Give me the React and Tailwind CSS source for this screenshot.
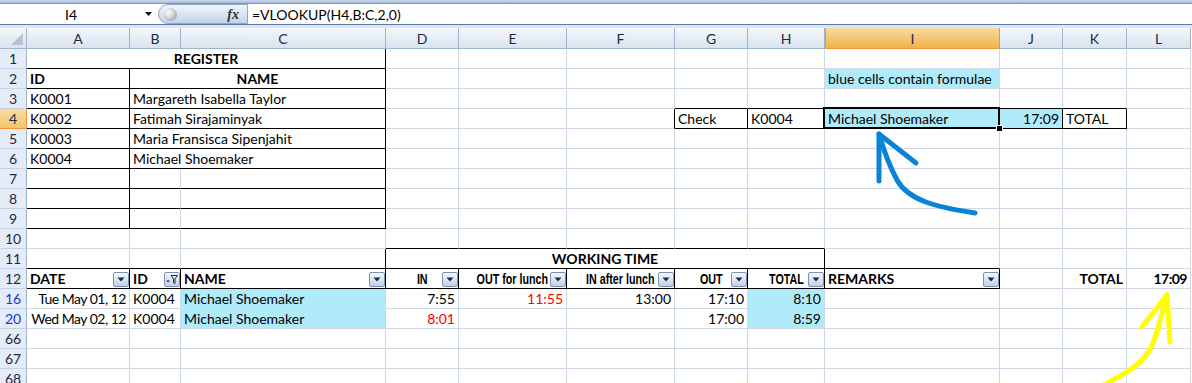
import React from "react";

const COLS = ["A", "B", "C", "D", "E", "F", "G", "H", "I", "J", "K", "L"];

// border colours: g = gridline, k = black border, c = hidden under the blue fill
const RIGHT = { g: "border-r-[#d0d7e5]", k: "border-r-black", c: "border-r-[#b0ebfa]" };
const BOTTOM = { g: "border-b-[#d0d7e5]", k: "border-b-black", c: "border-b-[#b0ebfa]" };
const SPAN = { 1: "", 2: "col-span-2", 3: "col-span-3", 5: "col-span-5" };
const ALIGN = { l: "justify-start", r: "justify-end", c: "justify-center" };

const box = { r: "k", b: "k" };
const bk = { b: "k" };

const rows = [
  { n: "1", cells: { A: { ...box, span: 3, t: "REGISTER", bold: true, al: "c" } } },
  {
    n: "2",
    cells: {
      A: { ...box, t: "ID", bold: true },
      B: { ...box, span: 2, t: "NAME", bold: true, al: "c" },
      I: { t: "blue cells contain formulae", bg: true },
    },
  },
  {
    n: "3",
    cells: {
      A: { ...box, t: "K0001" },
      B: { ...box, span: 2, t: "Margareth Isabella Taylor" },
      G: bk, H: bk, I: bk, J: bk, K: bk,
    },
  },
  {
    n: "4",
    active: true,
    cells: {
      A: { ...box, t: "K0002" },
      B: { ...box, span: 2, t: "Fatimah Sirajaminyak" },
      F: { r: "k" },
      G: { ...box, t: "Check" },
      H: { ...box, t: "K0004" },
      I: { ...box, t: "Michael Shoemaker", bg: true, sel: true },
      J: { ...box, t: "17:09", al: "r", bg: true },
      K: { ...box, t: "TOTAL" },
    },
  },
  { n: "5", cells: { A: { ...box, t: "K0003" }, B: { ...box, span: 2, t: "Maria Fransisca Sipenjahit" } } },
  { n: "6", cells: { A: { ...box, t: "K0004" }, B: { ...box, span: 2, t: "Michael Shoemaker" } } },
  { n: "7", cells: { A: box, B: bk, C: box } },
  { n: "8", cells: { A: box, B: bk, C: box } },
  { n: "9", cells: { A: box, B: bk, C: box } },
  { n: "10", cells: { D: bk, E: bk, F: bk, G: bk, H: bk } },
  {
    n: "11",
    cells: {
      A: bk, B: bk, C: box,
      D: { ...box, span: 5, t: "WORKING TIME", bold: true, al: "c" },
      I: bk,
    },
  },
  {
    n: "12",
    cells: {
      A: { ...box, t: "DATE", bold: true, f: "dd" },
      B: { ...box, t: "ID", bold: true, f: "on" },
      C: { ...box, t: "NAME", bold: true, f: "dd" },
      D: { ...box, t: "IN", narrow: true, al: "c", f: "dd" },
      E: { ...box, t: "OUT for lunch", narrow: true, al: "c", f: "dd" },
      F: { ...box, t: "IN after lunch", narrow: true, al: "c", f: "dd" },
      G: { ...box, t: "OUT", narrow: true, al: "c", f: "dd" },
      H: { ...box, t: "TOTAL", narrow: true, al: "c", f: "dd" },
      I: { ...box, t: "REMARKS", bold: true, f: "dd" },
      K: { t: "TOTAL", bold: true, al: "r" },
      L: { t: "17:09", bold: true, al: "r", tight: true },
    },
  },
  {
    n: "16",
    filtered: true,
    cells: {
      A: { t: "Tue May 01, 12", al: "r", tight: true },
      B: { t: "K0004" },
      C: { t: "Michael Shoemaker", bg: true, b: "c" },
      D: { t: "7:55", al: "r" },
      E: { t: "11:55", al: "r", red: true },
      F: { t: "13:00", al: "r" },
      G: { t: "17:10", al: "r" },
      H: { t: "8:10", al: "r", bg: true, b: "c" },
    },
  },
  {
    n: "20",
    filtered: true,
    cells: {
      A: { t: "Wed May 02, 12", al: "r", tight: true },
      B: { t: "K0004" },
      C: { t: "Michael Shoemaker", bg: true },
      D: { t: "8:01", al: "r", red: true },
      G: { t: "17:00", al: "r" },
      H: { t: "8:59", al: "r", bg: true },
    },
  },
  { n: "66", cells: {} },
  { n: "67", cells: {} },
  { n: "68", cells: {} },
];

function FilterButton({ active }) {
  return (
    <div className="absolute right-0 bottom-[1px] z-10 flex h-[15px] w-[16px] items-center justify-center rounded-[2px] border border-[#7d92b2] bg-linear-to-b from-[#f5f8fc] to-[#c3d1e5]">
      {active ? (
        <svg width="14" height="13" viewBox="0 0 14 13">
          <path d="M1 7.5 H5 L3 9.5 Z" fill="#1b2a4a" />
          <path d="M6 2.5 H12.5 L10 5.8 V10.5 L8.5 9.6 V5.8 Z" fill="none" stroke="#1b2a4a" strokeWidth="1" />
        </svg>
      ) : (
        <svg width="8" height="5" viewBox="0 0 8 5">
          <path d="M0.5 0.5 H7.5 L4 4.5 Z" fill="#1b2a4a" />
        </svg>
      )}
    </div>
  );
}

function Cell({ c }) {
  return (
    <div
      className={`relative flex items-end whitespace-nowrap border-r border-b px-[3px] ${RIGHT[c.r || "g"]} ${BOTTOM[c.b || "g"]} ${SPAN[c.span || 1]} ${ALIGN[c.al || "l"]} ${c.bg ? "bg-[#b0ebfa]" : ""} ${c.red ? "text-[#ff0000]" : "text-black"}`}
    >
      {c.narrow ? (
        // Arial Narrow look: Arial-width bold squeezed horizontally
        <span className="inline-block origin-center scale-x-[0.74] font-['Liberation_Sans',sans-serif] text-[14.5px] leading-[18px] font-bold">
          {c.t}
        </span>
      ) : (
        <span className={`leading-[18px] ${c.bold ? "font-bold" : ""} ${c.tight ? "tracking-[-0.5px]" : ""}`}>{c.t}</span>
      )}
      {c.f && <FilterButton active={c.f === "on"} />}
      {c.sel && (
        <>
          <div className="absolute -top-[2px] -left-[2px] -right-[1px] -bottom-[1px] z-10 border-2 border-black" />
          <div className="absolute -right-[4px] -bottom-[4px] z-20 h-[7px] w-[7px] border border-white bg-black" />
        </>
      )}
    </div>
  );
}

function RowHead({ row }) {
  if (row.active) {
    return (
      <div className="flex items-end justify-center border-r border-b border-[#f29436] bg-linear-to-b from-[#f9dca6] to-[#f3c46c] leading-[18px] text-[#1c2a3f]">
        {row.n}
      </div>
    );
  }
  return (
    <div
      className={`flex items-end justify-center border-r border-r-[#9eb6ce] border-b border-b-[#c5d2e3] bg-[#e4ecf7] leading-[18px] ${row.filtered ? "text-[#1538d6]" : "text-[#1c2a3f]"}`}
    >
      {row.n}
    </div>
  );
}

function ColHead({ label }) {
  if (label === "I") {
    return (
      <div className="flex items-center justify-center border-x border-b border-[#f29436] bg-linear-to-b from-[#f8d9a0] to-[#f0b444] text-[#1c2a3f]">
        {label}
      </div>
    );
  }
  return (
    <div className="flex items-center justify-center border-r border-b border-[#9eb6ce] bg-linear-to-b from-[#f6f8fc] to-[#d8e2ef] text-[#1c2a3f]">
      {label}
    </div>
  );
}

function FormulaBar() {
  return (
    <div className="h-[28px] bg-[#dde6f2]">
      <div className="h-[3px] bg-linear-to-b from-[#cbd9ec] to-[#a7bcd9]" />
      <div className="flex h-[22px] border-y border-t-[#7f98bd] border-b-[#5a79a9] bg-white">
        <div className="relative flex w-[152px] items-center">
          <span className="w-[142px] text-center">I4</span>
          <svg className="absolute left-[145px] top-[8px]" width="7" height="4" viewBox="0 0 7 4">
            <path d="M0 0 H7 L3.5 4 Z" fill="#111" />
          </svg>
        </div>
        <div className="ml-[6px] flex w-[90px] items-center justify-between rounded-l-full border border-[#8ea6c7] bg-linear-to-b from-[#f2f6fb] to-[#c4d3e8] pl-[5px] pr-[8px]">
          <div className="h-[13px] w-[13px] rounded-full bg-radial-[at_35%_35%] from-[#ffffff] via-[#c8ccd2] to-[#7d8590]" />
          <span className="font-['Liberation_Serif',serif] text-[14px] font-bold italic text-[#333]">fx</span>
        </div>
        <div className="flex items-center pl-[4px]">=VLOOKUP(H4,B:C,2,0)</div>
      </div>
    </div>
  );
}

function Arrows() {
  return (
    <svg className="pointer-events-none absolute top-0 left-0 z-30" width="1192" height="383" viewBox="0 0 1192 383">
      <g fill="none" stroke="#0a82d8" strokeWidth="5" strokeLinecap="round" strokeLinejoin="round">
        <path d="M975 213 C 935 207, 908 200, 897 180 C 888 163, 883 148, 879 134" />
        <path d="M879 181 L879 134 L916 163" />
      </g>
      <g fill="none" stroke="#ffff00" strokeWidth="5" strokeLinecap="round" strokeLinejoin="round">
        <path d="M1102 386 C 1128 372, 1148 362, 1155 338 C 1161 318, 1164 306, 1167 295" />
        <path d="M1142 327 L1167 295 L1170 342" />
      </g>
    </svg>
  );
}

export default function App() {
  return (
    <div className="relative h-[383px] w-[1192px] overflow-hidden bg-white font-['Lato',sans-serif] text-[14px] text-black">
      <FormulaBar />
      <div className="grid grid-cols-[27px_103px_51px_205px_73px_108px_108px_73px_77px_175px_63px_64px_64px] grid-rows-[21px] auto-rows-[20px]">
        <div className="relative border-r border-b border-[#9eb6ce] bg-linear-to-b from-[#f6f8fc] to-[#d8e2ef]">
          <svg className="absolute right-[3px] bottom-[3px]" width="12" height="12" viewBox="0 0 12 12">
            <path d="M12 0 V12 H0 Z" fill="#b4c3d6" />
          </svg>
        </div>
        {COLS.map((c) => (
          <ColHead key={c} label={c} />
        ))}
        {rows.map((row) => {
          const out = [<RowHead key={row.n + "h"} row={row} />];
          for (let i = 0; i < COLS.length; i++) {
            const c = row.cells[COLS[i]] || {};
            out.push(<Cell key={row.n + COLS[i]} c={c} />);
            i += (c.span || 1) - 1;
          }
          return out;
        })}
      </div>
      <Arrows />
    </div>
  );
}
